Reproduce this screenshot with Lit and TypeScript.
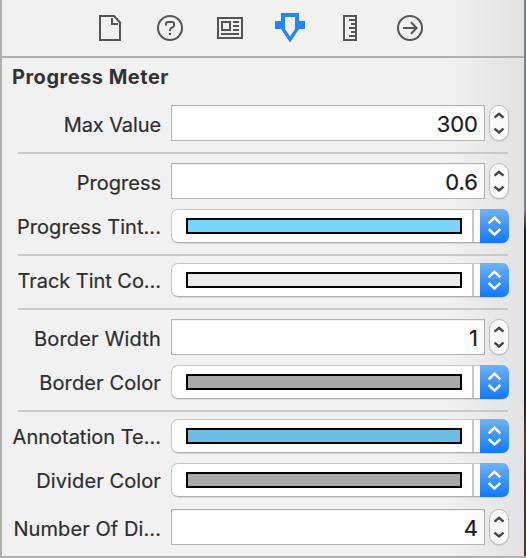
import { LitElement, html, css, svg } from "lit";
import { customElement, property } from "lit/decorators.js";
import { styleMap } from "lit/directives/style-map.js";
import { classMap } from "lit/directives/class-map.js";

type Row =
  | { kind: "number"; label: string; value: string; gap: number; track?: number }
  | { kind: "color"; label: string; color: string; gap: number; track?: number }
  | { kind: "rule"; gap: number };

const ROWS: Row[] = [
  { kind: "number", label: "Max Value", value: "300", gap: 0, track: -0.1 },
  { kind: "rule", gap: 11 },
  { kind: "number", label: "Progress", value: "0.6", gap: 9 },
  { kind: "color", label: "Progress Tint...", color: "#78d3fd", gap: 10, track: 0.05 },
  { kind: "rule", gap: 11 },
  { kind: "color", label: "Track Tint Co...", color: "#ebebeb", gap: 7, track: -0.05 },
  { kind: "rule", gap: 11 },
  { kind: "number", label: "Border Width", value: "1", gap: 9, track: 0.18 },
  { kind: "color", label: "Border Color", color: "#a9a9a9", gap: 10, track: 0.12 },
  { kind: "rule", gap: 11 },
  { kind: "color", label: "Annotation Te...", color: "#6bbde3", gap: 7 },
  { kind: "color", label: "Divider Color", color: "#a9a9a9", gap: 10, track: 0.1 },
  { kind: "number", label: "Number Of Di...", value: "4", gap: 12, track: 0.08 },
];

@customElement("number-field")
export class NumberField extends LitElement {
  @property() value = "";
  static styles = css`
    :host { display: flex; gap: 4px; height: 36px; }
    .box {
      box-sizing: border-box; width: 314px; height: 36px;
      border: 1px solid #b3b3b3;
      background: linear-gradient(90deg, #fff 85%, #fbfbfb);
      box-shadow: inset 0 1px 0 #f0f0f0;
      font: 22px/36px Inter, "Liberation Sans", sans-serif;
      color: #1a1a1a; text-align: right; padding-right: 6px;
      -webkit-text-stroke: 0.2px #1a1a1a;
    }
    .stepper {
      box-sizing: border-box; width: 20px; height: 36px; border-radius: 10px;
      border: 1px solid #bdbdbd; background: #f9f9f9;
      box-shadow: 0 1px 1px rgba(0, 0, 0, 0.12);
    }
    svg { display: block; }
  `;
  render() {
    return html`
      <div class="box">${this.value}</div>
      <div class="stepper">
        <svg width="18" height="34" viewBox="0 0 18 34" fill="none" stroke="#444" stroke-width="2.4">
          <path d="M4.5 11.6 L9 7.8 L13.5 11.6 M4.5 22.6 L9 26.4 L13.5 22.6" />
        </svg>
      </div>
    `;
  }
}

@customElement("color-popup")
export class ColorPopup extends LitElement {
  @property() color = "";
  static styles = css`
    :host {
      display: flex; box-sizing: border-box; width: 338px; height: 34px;
      border: 1px solid #c6c6c6; border-bottom-color: #b0b0b0; border-right: 0;
      border-radius: 7px;
      background: linear-gradient(90deg, #fff 80%, #fbfbfb);
      box-shadow: 0 1px 1px rgba(0, 0, 0, 0.1);
    }
    .swatch {
      box-sizing: border-box; width: 276px; height: 16px; margin: 8px 10px 0 14px;
      border: 2px solid #000;
    }
    .line { width: 2px; height: 32px; background: #c8c8c8; }
    .button {
      width: 29px; height: 34px; margin: -1px 0 0 6px;
      border-radius: 0 7px 7px 0;
      background: linear-gradient(#70b3f3, #4095f5 50%, #1278fb);
    }
    svg { display: block; }
  `;
  render() {
    return html`
      <div class="swatch" style=${styleMap({ background: this.color })}></div>
      <div class="line"></div>
      <div class="button">
        <svg width="29" height="34" viewBox="0 0 29 34" fill="none" stroke="#fff" stroke-width="2.5">
          <path d="M8.7 14.3 L14.5 8.7 L20.3 14.3 M8.7 20 L14.5 25.6 L20.3 20" />
        </svg>
      </div>
    `;
  }
}

const FILE = svg`
  <path d="M100 16 H114 L120 22.5 V40 H100 Z" />
  <path d="M112 18 V24 H118" />`;
const HELP = svg`
  <circle cx="170" cy="28" r="12" />
  <path d="M166 25.5 V24 Q166 22 168 22 H172 Q174 22 174 24 V25.5 Q174 27 172 27.6 Q170 28.2 170 31" />
  <path d="M170 33 V35" />`;
const IDENTITY = svg`
  <path d="M218 18 H242 V38 H218 Z M222 22 H230 V30 H222 Z" />
  <path d="M233 22 H239 M233 26 H239 M233 30 H239 M221 34 H239" />`;
const RULER = svg`
  <path d="M344 16 H356 V40 H344 Z" />
  <path d="M349 20 H356 M351 24 H356 M349 28 H356 M351 32 H356 M349 36 H356" />`;
const CONNECTIONS = svg`
  <circle cx="410" cy="28" r="12" />
  <path d="M403 28 H416 M411 22.3 L416.6 28 L411 33.7" />`;

@customElement("app-root")
export class AppRoot extends LitElement {
  static styles = css`
    :host {
      display: block; position: relative; box-sizing: border-box;
      width: 526px; height: 558px; overflow: hidden;
      background: linear-gradient(90deg, #f1f1f1 445px, #e2e2e2 522px);
      border-left: 2px solid #b0b0b0;
      border-bottom: 2px solid #b0b0b0;
      font-family: Inter, "Liberation Sans", sans-serif; color: #333;
    }
    .bar { height: 56px; border-bottom: 2px solid #b0b0b0; }
    .bar svg { display: block; }
    .title {
      margin: 0; padding-left: 10px; height: 47px;
      font-size: 20px; font-weight: 700; line-height: 38px; letter-spacing: 0.5px;
    }
    .row { display: flex; }
    .label {
      width: 159px; margin-right: 10px; text-align: right; white-space: nowrap;
      font-size: 20px; line-height: 36px; height: 34px; color: #2e2e2e;
      -webkit-text-stroke: 0.2px #2e2e2e;
    }
    .label.tall { line-height: 40px; }
    .rule { height: 2px; margin-left: 16px; width: 490px; background: #c9c9c9; }
    .edge {
      position: absolute; top: 0; right: 0; bottom: -2px; width: 2px;
      background: linear-gradient(#7d8184 0 210px, #1c2026 230px 400px, #6a3222 440px, #4a2a22 480px, #5a3428);
    }
  `;

  private renderRow(row: Row) {
    const offset = styleMap({ marginTop: `${row.gap}px` });
    if (row.kind === "rule") return html`<div class="rule" style=${offset}></div>`;
    return html`
      <div class="row" style=${offset}>
        <div
          class=${classMap({ label: true, tall: row.kind === "number" })}
          style=${styleMap({ letterSpacing: `${row.track ?? 0}px` })}
        >${row.label}</div>
        ${row.kind === "number"
          ? html`<number-field .value=${row.value}></number-field>`
          : html`<color-popup .color=${row.color}></color-popup>`}
      </div>
    `;
  }

  render() {
    return html`
      <div class="bar">
        <svg width="522" height="56" viewBox="2 0 522 56" fill="none" stroke="#555" stroke-width="2">
          ${FILE}${HELP}${IDENTITY}
          <path d="M281 13 H299 V21 H305 V29 H299 L290 42.5 L281 29 H275 V21 H281 Z M285 17 V29 L290 36.5 L295 29 V17 Z"
            fill="#2385fb" fill-rule="evenodd" stroke="none" />
          ${RULER}${CONNECTIONS}
        </svg>
      </div>
      <h1 class="title">Progress Meter</h1>
      ${ROWS.map((row) => this.renderRow(row))}
      <div class="edge"></div>
    `;
  }
}
